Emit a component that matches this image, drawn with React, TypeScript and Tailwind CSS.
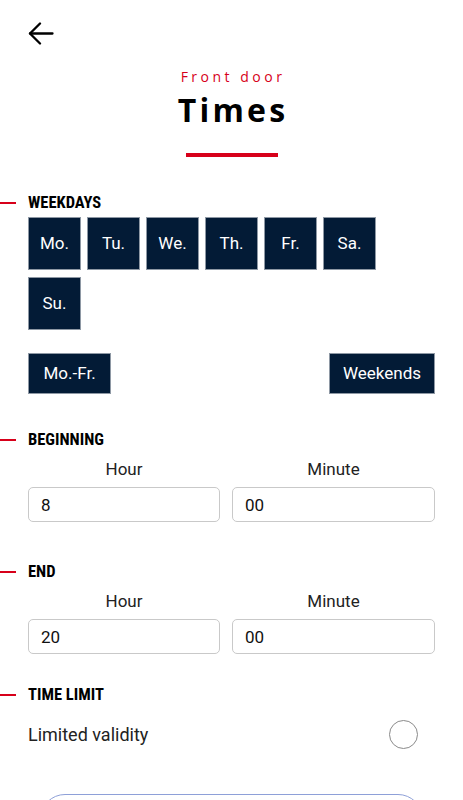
import type { ReactNode } from 'react';

const days = ['Mo.', 'Tu.', 'We.', 'Th.', 'Fr.', 'Sa.', 'Su.'];

const SectionLabel = ({ children }: { children: ReactNode }) => (
  <div className="-ml-7 flex h-[16px] items-center gap-3">
    <span className="h-[2px] w-4 bg-[#d7001a]" />
    <span className="font-['Liberation_Sans_Narrow','Roboto_Condensed','Liberation_Sans',sans-serif] text-[16.5px] leading-none font-bold uppercase">
      {children}
    </span>
  </div>
);

const TimeFields = ({ hour, minute }: { hour: string; minute: string }) => (
  <div className="mt-[11px] grid grid-cols-[192px_1fr] gap-x-3">
    <span className="text-center text-[17px] leading-[20px] text-[#222]">Hour</span>
    <span className="text-center text-[17px] leading-[20px] text-[#222]">Minute</span>
    <input
      className="mt-[8px] h-[35px] w-full rounded-[5px] border border-[#c9c9c9] px-[12px] text-[17px] text-[#111] outline-none"
      readOnly
      value={hour}
    />
    <input
      className="mt-[8px] h-[35px] w-full rounded-[5px] border border-[#c9c9c9] px-[12px] text-[17px] text-[#111] outline-none"
      readOnly
      value={minute}
    />
  </div>
);

export default function App() {
  return (
    <div className="min-h-screen overflow-hidden bg-white font-['Roboto','Liberation_Sans',sans-serif] text-black">
      <div className="px-7">
        <button className="mt-[22px] block h-[23px] w-[26px]" type="button">
          <svg fill="none" height="23" stroke="#000" strokeLinecap="round" strokeLinejoin="round" strokeWidth="2.3" viewBox="0 0 26 23" width="26">
            <path d="M24.5 11.5H2" />
            <path d="M12 1.5 2 11.5l10 10" />
          </svg>
        </button>

        <header className="mt-[24px] flex flex-col items-center font-['Open_Sans',sans-serif]">
          <p className="pl-[3px] text-[14px] leading-[16px] tracking-[0.25em] text-[#d7001a]">Front door</p>
          <h1 className="mt-[7px] pl-[3px] text-[32px] leading-[36px] font-bold tracking-[0.1em]">Times</h1>
          <span className="mt-[25px] h-[4px] w-[92px] bg-[#d7001a]" />
        </header>

        <section className="mt-[38px]">
          <SectionLabel>Weekdays</SectionLabel>
          <div className="mt-[6px] flex w-[360px] flex-wrap gap-x-[6px] gap-y-[7px]">
            {days.map((day) => (
              <button
                className="flex h-[53px] w-[53px] items-center justify-center border border-[#8e98a4] bg-[#031b36] text-[17px] text-white"
                key={day}
                type="button"
              >
                {day}
              </button>
            ))}
          </div>
          <div className="mt-[23px] flex justify-between">
            <button className="h-[41px] border border-[#8e98a4] bg-[#031b36] px-[14.5px] text-[17px] text-white" type="button">
              Mo.-Fr.
            </button>
            <button className="h-[41px] border border-[#8e98a4] bg-[#031b36] px-[13px] text-[17px] text-white" type="button">
              Weekends
            </button>
          </div>
        </section>

        <section className="mt-[38px]">
          <SectionLabel>Beginning</SectionLabel>
          <TimeFields hour="8" minute="00" />
        </section>

        <section className="mt-[42px]">
          <SectionLabel>End</SectionLabel>
          <TimeFields hour="20" minute="00" />
        </section>

        <section className="mt-[33px]">
          <SectionLabel>Time limit</SectionLabel>
          <div className="mt-[17px] flex items-center justify-between pr-[17px]">
            <span className="text-[18px] leading-[20px] text-[#222]">Limited validity</span>
            <span className="h-[29px] w-[29px] rounded-full border border-[#8a8a8a]" />
          </div>
        </section>

        <button
          className="mx-[12px] mt-[45px] mb-8 block h-[50px] w-[383px] rounded-[25px] border border-[#8ea0d8] text-[17px]"
          type="button"
        />
      </div>
    </div>
  );
}
